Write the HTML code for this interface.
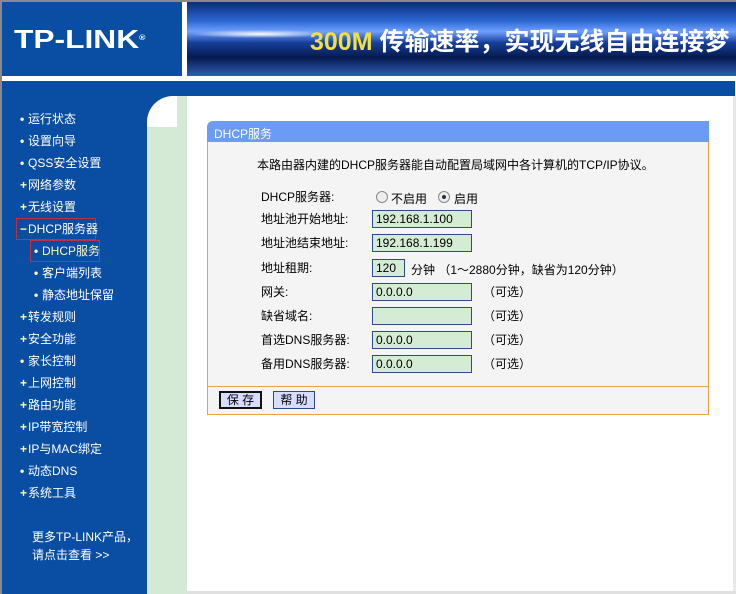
<!DOCTYPE html>
<html><head><meta charset="utf-8"><style>
*{margin:0;padding:0;box-sizing:border-box}
body{width:736px;height:594px;position:relative;overflow:hidden;background:#fff;font-family:"Liberation Sans","Noto Sans CJK SC",sans-serif;font-size:12px;color:#000}
.a{position:absolute}
.m{position:absolute;color:#fff;font-size:12px;line-height:14px;white-space:nowrap}
.m b{display:inline-block;width:8px;color:#fff8c0;font-weight:bold}
.lbl{position:absolute;left:261px;font-size:12px;line-height:14px;white-space:nowrap}
.in{position:absolute;left:372px;width:100px;height:18px;background:#d4ebd4;border:1px solid #2a4a8a;font-size:12px;line-height:16px;padding-left:3px}
.opt{position:absolute;left:483px;font-size:12px;line-height:14px}
</style></head><body>
<div class="a" style="left:0;top:0;width:736px;height:2px;background:#8a8a8a"></div>
<div class="a" style="left:0;top:0;width:2px;height:594px;background:#8a8a8a"></div>
<div class="a" style="left:2px;top:2px;width:180px;height:74px;background:#0a4ea3"></div>
<div class="a" style="left:14px;top:25px;color:#fff;font-size:26px;line-height:28px;font-weight:bold;font-family:'Liberation Sans',sans-serif;transform:scaleX(1.22);transform-origin:left top;white-space:nowrap">TP-LINK<span style="font-size:7px;vertical-align:top">®</span></div>
<div class="a" style="left:187px;top:2px;width:549px;height:74px;background:linear-gradient(180deg,#0a2c7a 0%,#2a66d0 25%,#6fa0ff 40%,#173f9a 55%,#061a50 75%,#2d5fb0 100%)"></div>
<div class="a" style="left:190px;top:30px;width:140px;height:8px;background:radial-gradient(ellipse,#fff 0%,rgba(255,255,255,0) 70%)"></div>
<div class="a" style="left:310px;top:22px;font-size:25px;font-weight:bold;color:#f0e040;white-space:nowrap">300M <span style="color:#fff">传输速率，实现无线自由连接梦</span></div>
<div class="a" style="left:2px;top:81px;width:733px;height:15px;background:#0a4ea3"></div>
<div class="a" style="left:2px;top:96px;width:145px;height:498px;background:#0a4ea3"></div>
<div class="a" style="left:147px;top:96px;width:40px;height:498px;background:#d4ead4"></div>
<div class="a" style="left:147px;top:96px;width:30px;height:31px;background:#0a4ea3"></div>
<div class="a" style="left:147px;top:96px;width:30px;height:31px;background:#fff;border-top-left-radius:26px"></div>
<div class="a" style="left:733px;top:96px;width:3px;height:498px;background:#e8e8e8"></div>
<div class="a" style="left:187px;top:591px;width:549px;height:3px;background:#e0e0e0"></div>

<div class="m" style="left:20px;top:112px"><b>•</b>运行状态</div>
<div class="m" style="left:20px;top:134px"><b>•</b>设置向导</div>
<div class="m" style="left:20px;top:156px"><b>•</b>QSS安全设置</div>
<div class="m" style="left:20px;top:178px"><b>+</b>网络参数</div>
<div class="m" style="left:20px;top:200px"><b>+</b>无线设置</div>
<div class="a" style="left:16px;top:218px;width:80px;height:22px;border:1px solid #c03040"></div>
<div class="m" style="left:20px;top:222px"><b>−</b>DHCP服务器</div>
<div class="a" style="left:30px;top:240px;width:70px;height:22px;border:1px solid #c03040"></div>
<div class="m" style="left:34px;top:244px;color:#fff8c0"><b>•</b>DHCP服务</div>
<div class="m" style="left:34px;top:266px"><b>•</b>客户端列表</div>
<div class="m" style="left:34px;top:288px"><b>•</b>静态地址保留</div>
<div class="m" style="left:20px;top:310px"><b>+</b>转发规则</div>
<div class="m" style="left:20px;top:332px"><b>+</b>安全功能</div>
<div class="m" style="left:20px;top:354px"><b>•</b>家长控制</div>
<div class="m" style="left:20px;top:376px"><b>+</b>上网控制</div>
<div class="m" style="left:20px;top:398px"><b>+</b>路由功能</div>
<div class="m" style="left:20px;top:420px"><b>+</b>IP带宽控制</div>
<div class="m" style="left:20px;top:442px"><b>+</b>IP与MAC绑定</div>
<div class="m" style="left:20px;top:464px"><b>•</b>动态DNS</div>
<div class="m" style="left:20px;top:486px"><b>+</b>系统工具</div>
<div class="m" style="left:32px;top:530px">更多TP-LINK产品，</div>
<div class="m" style="left:32px;top:548px">请点击查看 &gt;&gt;</div>

<div class="a" style="left:207px;top:121px;width:502px;height:21px;background:#6b9bf5;border-radius:6px 0 0 0"></div>
<div class="a" style="left:214px;top:125px;color:#fff;font-size:12px">DHCP服务</div>
<div class="a" style="left:207px;top:142px;width:502px;height:273px;background:#f4f4f4;border:1px solid #f0a040;border-top:none"></div>
<div class="a" style="left:207px;top:386px;width:502px;height:1px;background:#f0a040"></div>
<div class="a" style="left:257px;top:156px;white-space:nowrap">本路由器内建的DHCP服务器能自动配置局域网中各计算机的TCP/IP协议。</div>
<div class="lbl" style="top:190px">DHCP服务器:</div>
<div class="a" style="left:376px;top:191px;width:12px;height:12px;border-radius:50%;border:1px solid #888;background:#eee"></div>
<div class="a" style="left:391px;top:190px">不启用</div>
<div class="a" style="left:438px;top:191px;width:12px;height:12px;border-radius:50%;border:1px solid #888;background:#eee"></div>
<div class="a" style="left:442px;top:195px;width:4px;height:4px;border-radius:50%;background:#234"></div>
<div class="a" style="left:454px;top:190px">启用</div>
<div class="lbl" style="top:212px">地址池开始地址:</div><div class="in" style="top:210px">192.168.1.100</div>
<div class="lbl" style="top:236px">地址池结束地址:</div><div class="in" style="top:234px">192.168.1.199</div>
<div class="lbl" style="top:261px">地址租期:</div><div class="in" style="top:259px;width:33px">120</div>
<div class="a" style="left:411px;top:261px;white-space:nowrap">分钟 （1～2880分钟，缺省为120分钟）</div>
<div class="lbl" style="top:285px">网关:</div><div class="in" style="top:283px">0.0.0.0</div><div class="opt" style="top:285px">（可选）</div>
<div class="lbl" style="top:309px">缺省域名:</div><div class="in" style="top:307px"></div><div class="opt" style="top:309px">（可选）</div>
<div class="lbl" style="top:333px">首选DNS服务器:</div><div class="in" style="top:331px">0.0.0.0</div><div class="opt" style="top:333px">（可选）</div>
<div class="lbl" style="top:357px">备用DNS服务器:</div><div class="in" style="top:355px">0.0.0.0</div><div class="opt" style="top:357px">（可选）</div>
<div class="a" style="left:219px;top:391px;width:43px;height:18px;background:#d8dcff;border:2px solid #111;text-align:center;line-height:14px">保 存</div>
<div class="a" style="left:273px;top:391px;width:42px;height:18px;background:#d8dcff;border:1px solid #2a4a8a;text-align:center;line-height:16px">帮 助</div>
</body></html>
